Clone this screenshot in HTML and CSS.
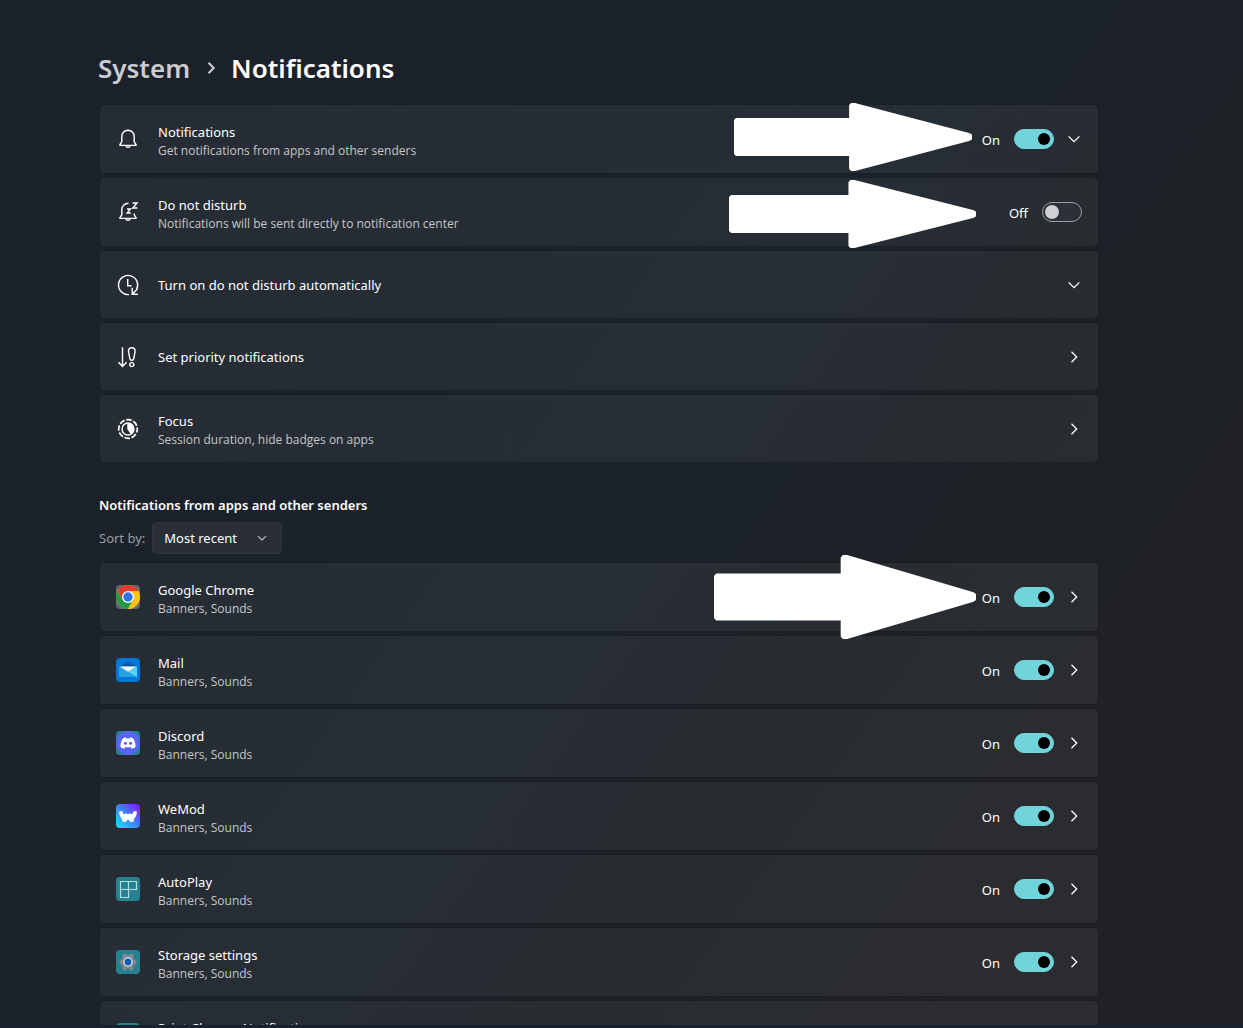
FILE: index.html
```html
<!DOCTYPE html>
<html lang="en">
<head>
  <meta charset="UTF-8">
  <meta name="viewport" content="width=device-width, initial-scale=1.0">
  <title>Notifications</title>
  <link rel="stylesheet" href="styles.css">
</head>
<body>
  <!-- Shared shapes -->
  <svg class="defs" aria-hidden="true">
    <symbol id="chev-right" viewBox="0 0 16 16"><path d="M5.5 2.8 10.7 8l-5.2 5.2" fill="none" stroke="currentColor"/></symbol>
    <symbol id="chev-down" viewBox="0 0 16 16"><path d="M2.6 5.4 8 10.6l5.4-5.2" fill="none" stroke="currentColor"/></symbol>
    <symbol id="arrow" viewBox="0 0 244 68" preserveAspectRatio="none"><path d="M2 15H118V2l2-2h4L241 30q3 1 3 2v4q0 1-3 2L124 68h-4l-2-2V53H2l-2-2V17z" fill="#fff"/></symbol>
  </svg>

  <main>
    <h1><a href="#">System</a><svg class="crumb"><use href="#chev-right"/></svg><span>Notifications</span></h1>

    <section class="list">
      <div class="card">
        <svg class="icon" viewBox="0 0 24 24"><path d="M4 17.500 5.800 14.800V9.400a6.200 6.200 0 0 1 12.400 0v5.400l1.800 2.700v.9H4zM9.700 18.600a2.400 2.400 0 0 0 4.600 0"/></svg>
        <div class="label"><label for="notif">Notifications</label><small>Get notifications from apps and other senders</small></div>
        <span class="state">On</span>
        <input type="checkbox" class="toggle" id="notif" checked>
        <button class="go" aria-label="Expand notifications"><svg><use href="#chev-down"/></svg></button>
        <svg class="arrow arrow-one"><use href="#arrow"/></svg>
      </div>
      <div class="card">
        <svg class="icon" viewBox="0 0 24 24"><path d="M12.500 3.200a6.400 6.400 0 0 0-6.700 6.200v5.400L4 17.500v.9h16v-.9l-1.800-2.700v-1.400M9.700 18.600a2.400 2.400 0 0 0 4.600 0"/><path d="M16.600 3h4.400l-4.200 5h4.600M11 9h3.400l-3.200 4h3.600"/></svg>
        <div class="label"><label for="dnd">Do not disturb</label><small>Notifications will be sent directly to notification center</small></div>
        <span class="state">Off</span>
        <input type="checkbox" class="toggle" id="dnd">
        <svg class="arrow arrow-two"><use href="#arrow"/></svg>
      </div>
      <div class="card short">
        <svg class="icon" viewBox="0 0 24 24"><path d="M11.7 6v6.800h3.800M13 21.600A9.600 9.600 0 1 1 20.600 16.500M16.200 14.800v6.400h5.600M16.400 21l5-5"/></svg>
        <div class="label"><span>Turn on do not disturb automatically</span></div>
        <button class="go" aria-label="Expand automatic rules"><svg><use href="#chev-down"/></svg></button>
      </div>
      <div class="card short">
        <svg class="icon" viewBox="0 0 24 24"><path d="M6.500 2.200v19M2.400 17.200l4.100 4.200 4.100-4.200M15.800 2.700c-2.200 0-3.600 1.400-3.300 3.800l1.300 7c.5 2.400 3.500 2.400 4 0l1.300-7c.3-2.400-1.100-3.800-3.300-3.800z"/><circle cx="15.800" cy="19.600" r="2"/></svg>
        <div class="label"><span>Set priority notifications</span></div>
        <button class="go" aria-label="Set priority notifications"><svg><use href="#chev-right"/></svg></button>
      </div>
      <div class="card short">
        <svg class="icon" viewBox="0 0 24 24"><circle cx="12" cy="12" r="9.300" stroke-width="1.700" stroke-dasharray="5.600 1.700" stroke-dashoffset="2"/><circle cx="12" cy="12" r="6"/><path d="M12 7.200v4.800l2.800 3.900A4.800 4.800 0 0 0 12 7.200z" fill="#fff"/></svg>
        <div class="label"><span>Focus</span><small>Session duration, hide badges on apps</small></div>
        <button class="go" aria-label="Focus settings"><svg><use href="#chev-right"/></svg></button>
      </div>
    </section>

    <h2>Notifications from apps and other senders</h2>
    <div class="sort">
      <label for="sort">Sort by:</label>
      <div class="select">
        <select id="sort"><option>Most recent</option><option>Name</option></select>
        <svg><use href="#chev-down"/></svg>
      </div>
    </div>

    <section class="list">
      <div class="card">
        <svg class="app" viewBox="0 0 24 24"><rect width="24" height="24" rx="4" fill="#63676c"/><circle cx="12" cy="12" r="12" fill="#fbbc04"/><path d="M1.600 6a12 12 0 0 1 20.800 0L12 6.200 6.800 15z" fill="#e33b2e"/><path d="M1.600 6A12 12 0 0 0 12 24l5.200-9-10.400 0z" fill="#269847"/><path d="M12 6.200h10.400A12 12 0 0 1 12 24l5.200-9z" fill="#fcc31e"/><circle cx="12" cy="12" r="6" fill="#fff"/><circle cx="12" cy="12" r="4.700" fill="#2a75ea"/></svg>
        <div class="label"><label for="chrome">Google Chrome</label><small>Banners, Sounds</small></div>
        <span class="state">On</span>
        <input type="checkbox" class="toggle" id="chrome" checked>
        <button class="go" aria-label="Google Chrome settings"><svg><use href="#chev-right"/></svg></button>
        <svg class="arrow arrow-three"><use href="#arrow"/></svg>
      </div>
      <div class="card">
        <svg class="app" viewBox="0 0 24 24"><rect width="24" height="24" rx="4" fill="#0078d7"/><path d="M3 8.500 12 4l9 4.500v2H3z" fill="#0a57a4"/><path d="M3 8.500h18V19H3z" fill="#35b8ee"/><path d="M3 8.500 21 19H3z" fill="#28a0df"/><path d="M12 13.800 21 8.500V19z" fill="#50d3f5"/><path d="M4 8.500h16l-8 5.300z" fill="#f4f4ef"/></svg>
        <div class="label"><label for="mail">Mail</label><small>Banners, Sounds</small></div>
        <span class="state">On</span>
        <input type="checkbox" class="toggle" id="mail" checked>
        <button class="go" aria-label="Mail settings"><svg><use href="#chev-right"/></svg></button>
      </div>
      <div class="card">
        <svg class="app" viewBox="0 0 24 24"><rect width="24" height="24" rx="4" fill="#248291"/><circle cx="12" cy="12" r="12" fill="#5865f2"/><path d="M9.800 6.300 7 7.200c-1.800 2.600-2.700 5.500-2.500 8.700 1.400 1 2.600 1.500 4 1.700l.9-1.500c1.700.4 3.500.4 5.200 0l.9 1.500c1.400-.2 2.600-.7 4-1.700.2-3.200-.7-6.100-2.500-8.700l-2.800-.9-.6 1.200h-3.200z" fill="#fff"/><circle cx="9.400" cy="12.300" r="1.500" fill="#5865f2"/><circle cx="14.600" cy="12.300" r="1.500" fill="#5865f2"/></svg>
        <div class="label"><label for="discord">Discord</label><small>Banners, Sounds</small></div>
        <span class="state">On</span>
        <input type="checkbox" class="toggle" id="discord" checked>
        <button class="go" aria-label="Discord settings"><svg><use href="#chev-right"/></svg></button>
      </div>
      <div class="card">
        <svg class="app" viewBox="0 0 24 24"><defs><linearGradient id="wm" x1="0" y1="1" x2="1" y2="0"><stop offset="0" stop-color="#18e8ff"/><stop offset=".5" stop-color="#3c83f6"/><stop offset="1" stop-color="#8a0cff"/></linearGradient></defs><rect width="24" height="24" rx="4" fill="url(#wm)"/><path d="M3.300 7.200 6 7l2.200 3.600L10 9.200l2 1 2-1 1.800 1.400L18 7l2.700.2c.4 3-.6 5.500-2.400 7.300l-1 3.400h-2.500L12 15.400l-2.800 2.500H6.700l-1-3.400C3.900 12.700 2.900 10.200 3.300 7.200z" fill="#fff"/></svg>
        <div class="label"><label for="wemod">WeMod</label><small>Banners, Sounds</small></div>
        <span class="state">On</span>
        <input type="checkbox" class="toggle" id="wemod" checked>
        <button class="go" aria-label="WeMod settings"><svg><use href="#chev-right"/></svg></button>
      </div>
      <div class="card">
        <svg class="app" viewBox="0 0 24 24"><rect width="24" height="24" rx="4" fill="#248291"/><path d="M4.500 4.500h16v8h-8v8h-8zM12.500 4.500v8h-8" fill="none" stroke="#b4dce2" stroke-width="1.200"/></svg>
        <div class="label"><label for="autoplay">AutoPlay</label><small>Banners, Sounds</small></div>
        <span class="state">On</span>
        <input type="checkbox" class="toggle" id="autoplay" checked>
        <button class="go" aria-label="AutoPlay settings"><svg><use href="#chev-right"/></svg></button>
      </div>
      <div class="card">
        <svg class="app" viewBox="0 0 24 24"><rect width="24" height="24" rx="4" fill="#248291"/><g stroke="#85898f" stroke-width="4.600" stroke-linecap="round"><path d="M8.700 5.900l6.600 12.200M15.300 5.900 8.700 18.100M5.600 12h12.800"/></g><circle cx="12" cy="12" r="6.800" fill="#85898f"/><circle cx="12" cy="12" r="4.700" fill="#dde6f0"/><circle cx="12" cy="12" r="3.400" fill="#0a5cb4"/></svg>
        <div class="label"><label for="storage">Storage settings</label><small>Banners, Sounds</small></div>
        <span class="state">On</span>
        <input type="checkbox" class="toggle" id="storage" checked>
        <button class="go" aria-label="Storage settings"><svg><use href="#chev-right"/></svg></button>
      </div>
      <div class="card">
        <svg class="app" viewBox="0 0 24 24"><rect width="24" height="24" rx="4" fill="#248291"/></svg>
        <div class="label"><label for="print">Print Chrome Notifications</label><small>Banners, Sounds</small></div>
        <input type="checkbox" class="toggle" id="print" checked>
        <button class="go" aria-label="Print settings"><svg><use href="#chev-right"/></svg></button>
      </div>
    </section>
  </main>
  <footer></footer>
</body>
</html>
```
FILE: styles.css
```css
* {
  box-sizing: border-box;
}
body {
  margin: 0;
  height: 100vh;
  display: flex;
  flex-direction: column;
  overflow: hidden;
  font-family: "Noto Sans", "Open Sans", sans-serif;
  font-size: 13px;
  line-height: 20px;
  color: #fff;
  background: linear-gradient(125deg, #1b212b 0%, #1b222a 50%, #202124 85%, #202124 100%);
}
main {
  flex: 1;
  min-height: 0;
  overflow: hidden;
  padding: 50px 145px 0 100px;
}
footer {
  height: 3px;
  background: #1a2230;
}
.defs {
  display: none;
}
h1 {
  display: flex;
  align-items: center;
  margin: 0 0 19px -2px;
  font-size: 26px;
  line-height: 36px;
  font-weight: 600;
}
h1 a {
  color: #cbcccf;
  text-decoration: none;
}
.crumb {
  width: 16px;
  height: 16px;
  margin: 0 12px 0 13px;
  color: #cbcccf;
  stroke-width: 2px;
}
.list {
  display: flex;
  flex-direction: column;
  gap: 5px;
}
.card {
  position: relative;
  display: flex;
  align-items: center;
  min-height: 68px;
  padding: 0 16px;
  border-radius: 4px;
  background: rgba(255, 255, 255, 0.05);
  box-shadow: 0 0 0 1px rgba(0, 0, 0, 0.1);
}
.short {
  min-height: 67px;
}
.icon, .app {
  flex: none;
  width: 24px;
  height: 24px;
  margin-right: 18px;
}
.icon {
  fill: none;
  stroke: #fff;
  stroke-width: 1.4;
}
.label {
  flex: 1;
  display: flex;
  flex-direction: column;
  padding-top: 2px;
}
.short .label {
  padding-top: 1px;
}
small {
  font-family: "Open Sans", sans-serif;
  font-size: 12px;
  line-height: 17px;
  color: #c5c7ca;
}
.state {
  margin-right: 14px;
  padding-top: 2px;
}
.toggle {
  appearance: none;
  display: flex;
  align-items: center;
  width: 40px;
  height: 20px;
  margin: 0;
  padding: 0 2px;
  border: 1px solid #9b9ea3;
  border-radius: 10px;
  background: #2b3039;
}
.toggle::before {
  content: "";
  width: 14px;
  height: 14px;
  border-radius: 50%;
  background: #cfd0d3;
}
.toggle:checked {
  justify-content: flex-end;
  padding: 0 3px;
  border-color: #71d4db;
  background: #71d4db;
}
.toggle:checked::before {
  width: 12px;
  height: 12px;
  background: #000;
}
.go {
  width: 16px;
  height: 16px;
  margin-left: 12px;
  padding: 0;
  border: none;
  background: none;
  color: #fff;
  stroke-width: 1.3px;
}
.go svg {
  display: block;
  width: 16px;
  height: 16px;
}
h2 {
  margin: 33px 0 7px -1px;
  font-size: 13px;
  line-height: 20px;
  font-weight: 600;
}
.sort {
  display: flex;
  align-items: center;
  gap: 7px;
  margin: 0 0 9px -1px;
}
.sort label {
  color: #9a9da2;
}
.select {
  position: relative;
}
.select select {
  appearance: none;
  width: 130px;
  height: 32px;
  padding: 0 11px;
  border: 1px solid #30353e;
  border-radius: 4px;
  background: #292e37;
  color: #fff;
  font: inherit;
}
.select svg {
  position: absolute;
  top: 10px;
  right: 14px;
  width: 12px;
  height: 12px;
  color: #c5c7ca;
  stroke-width: 1.5px;
  pointer-events: none;
}
/* Pointer arrows lying over the cards */
.arrow {
  position: absolute;
  z-index: 1;
  height: 68px;
}
.arrow-one {
  top: -2px;
  right: 126px;
  width: 238px;
}
.arrow-two {
  top: 2px;
  right: 122px;
  width: 247px;
}
.arrow-three {
  top: -8px;
  right: 122px;
  width: 262px;
  height: 84px;
}
```
